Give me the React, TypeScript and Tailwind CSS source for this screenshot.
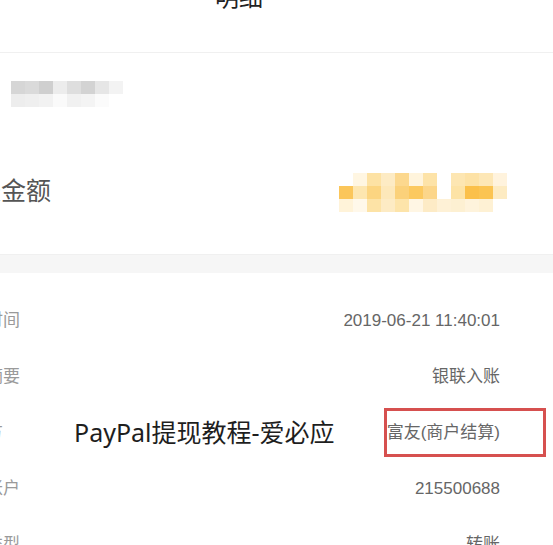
import React from 'react'

const rows = [
  { label: '交易时间', value: '2019-06-21 11:40:01' },
  { label: '交易摘要', value: '银联入账' },
  { label: '付款方', value: '富友(商户结算)' },
  { label: '对方账户', value: '215500688' },
  { label: '交易类型', value: '转账' },
]

// blurred name under the header
const grayTop = ['#d6d6d6', '#dadada', '#cfcfcf', '#ececec', '#dedede', '#d3d3d3', '#e6e6e6', '#f3f3f3']
const grayBottom = ['#ededed', '#efefef', '#f2f2f2', '#fafafa', '#f1f1f1', '#f4f4f4', '#fbfbfb', '#ffffff']

// blurred amount
const yellow = [
  ['#ffffff', '#fff6e2', '#fde2a4', '#fdebc4', '#fcd88e', '#fff4dc', '#fde3a8', '#ffffff', '#fde6b2', '#fde2a6', '#fde7b6', '#fff3dd'],
  ['#fbc65a', '#fde6b0', '#fcd581', '#fde8ba', '#fbd17a', '#fcc95f', '#fcd68a', '#ffffff', '#fde3a6', '#fbc04a', '#fbc452', '#fdebc2'],
  ['#fff3d9', '#fff8ea', '#fde3a6', '#fdebc4', '#fde4aa', '#fff6e4', '#fdebc6', '#fef1d6', '#fdf0d2', '#fef3dc', '#fef1d4', '#ffffff'],
]

function Mosaic({ grid, cell, rowH }: { grid: string[][]; cell: number; rowH: number }) {
  return (
    <svg width={grid[0].length * cell} height={grid.length * rowH} className="block">
      {grid.map((r, y) =>
        r.map((c, x) => <rect key={`${x}-${y}`} x={x * cell} y={y * rowH} width={cell} height={rowH} fill={c} />)
      )}
    </svg>
  )
}

export default function App() {
  return (
    <div
      className="relative w-[553px] h-[545px] overflow-hidden bg-white"
      style={{ fontFamily: '"Liberation Sans", "Noto Sans CJK SC", sans-serif' }}
    >
      <div className="flow-root h-[53px] border-b border-[#f0f0f0] pl-[215px]">
        <div className="-mt-[14px] text-[24px] leading-[24px] text-[#222]">明细</div>
      </div>

      <div className="h-[202px] border-b border-[#f0f0f0] flex flex-col">
        <div className="pt-[28px] pl-[11px]">
          <Mosaic grid={[grayTop, grayBottom]} cell={14} rowH={13} />
        </div>
        <div className="mt-[54px] h-[62px] flex items-center justify-between -ml-[49px] pr-[46px]">
          <span className="text-[25px] text-[#555]">入账金额</span>
          <Mosaic grid={yellow} cell={14} rowH={13} />
        </div>
      </div>

      <div className="h-[18px] bg-[#f6f6f6]" />

      <div className="pt-[20px] -ml-[48px] pr-[53px]">
        {rows.map((r) => (
          <div key={r.label} className="h-[56px] flex items-center justify-between text-[17px]">
            <span className="text-[#9a9a9a]">{r.label}</span>
            <span className="text-[#666]">{r.value}</span>
          </div>
        ))}
      </div>

      <div
        className="absolute left-[74px] top-[414px] text-[25px] leading-[36px] text-[#1e1e1e]"
        style={{ fontFamily: '"Noto Sans", "Noto Sans CJK SC", sans-serif' }}
      >
        PayPal提现教程-爱必应
      </div>

      <div className="absolute left-[384px] top-[408px] w-[162px] h-[49px] border-[3px] border-[#d6504f]" />
    </div>
  )
}
